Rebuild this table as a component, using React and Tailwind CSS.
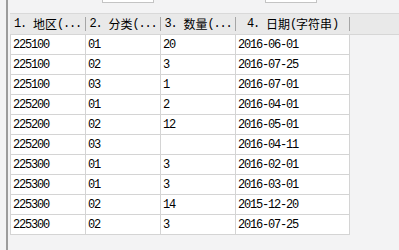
export default function App() {
  const rows = [
    ["225100", "01", "20", "2016-06-01"],
    ["225100", "02", "3", "2016-07-25"],
    ["225100", "03", "1", "2016-07-01"],
    ["225200", "01", "2", "2016-04-01"],
    ["225200", "02", "12", "2016-05-01"],
    ["225200", "03", "", "2016-04-11"],
    ["225300", "01", "3", "2016-02-01"],
    ["225300", "01", "3", "2016-03-01"],
    ["225300", "02", "14", "2015-12-20"],
    ["225300", "02", "3", "2016-07-25"],
  ];
  const mono = "font-['Liberation_Mono',monospace] text-[12px] tracking-[-1.2px]";
  const cjk = "font-['Noto_Sans_CJK_SC',sans-serif] text-[12px]";
  const widths = ["w-[76px]", "w-[75px]", "w-[75px]", "w-[114px]"];

  const Sep = () => <div className="w-[1px] h-[14px] self-center bg-[#a6a6a6] shrink-0" />;

  return (
    <div className="w-[399px] h-[250px] bg-[#f3f3f4] flex overflow-hidden text-black">
      <div className="w-[6px] shrink-0" />
      <div className="w-[2px] shrink-0 bg-[#9c9c9c]" />
      <div className="w-[2px] shrink-0" />
      <div className="flex-1 flex flex-col">
        <div className="h-[13px] flex items-start shrink-0">
          <div className="ml-[92px] w-[52px] h-[3px] bg-white border-x border-b border-[#c4c4c4]" />
          <div className="ml-[111px] w-[52px] h-[3px] bg-white border-x border-b border-[#c4c4c4]" />
        </div>
        <div className="h-[22px] flex bg-[#e9e9e9] border-t border-[#d9d9d9] border-b border-b-[#d6d6d6] shrink-0 leading-none">
          <div className={`${widths[0]} flex shrink-0`}>
            <div className="flex-1 flex items-center justify-center overflow-hidden whitespace-nowrap">
              <span className={mono}>1.</span>
              <span className={`${cjk} ml-[7px]`}>地区</span>
              <span className={mono}>(...</span>
            </div>
            <Sep />
          </div>
          <div className={`${widths[1]} flex shrink-0`}>
            <div className="flex-1 flex items-center justify-center overflow-hidden whitespace-nowrap">
              <span className={mono}>2.</span>
              <span className={`${cjk} ml-[7px]`}>分类</span>
              <span className={mono}>(...</span>
            </div>
            <Sep />
          </div>
          <div className={`${widths[2]} flex shrink-0`}>
            <div className="flex-1 flex items-center justify-center overflow-hidden whitespace-nowrap">
              <span className={mono}>3.</span>
              <span className={`${cjk} ml-[7px]`}>数量</span>
              <span className={mono}>(...</span>
            </div>
            <Sep />
          </div>
          <div className={`${widths[3]} flex shrink-0`}>
            <div className="flex-1 flex items-center justify-center overflow-hidden whitespace-nowrap">
              <span className={mono}>4.</span>
              <span className={`${cjk} ml-[7px]`}>日期</span>
              <span className={mono}>(</span>
              <span className={cjk}>字符串</span>
              <span className={mono}>)</span>
            </div>
            <Sep />
          </div>
          <div className="flex-1" />
        </div>
        <div className="w-[340px] flex flex-col bg-white border-l border-[#d4d4d4]">
          {rows.map((r, i) => (
            <div key={i} className="h-[20px] flex border-b border-[#d4d4d4]">
              {r.map((c, j) => (
                <div
                  key={j}
                  className={`${j === 0 ? "w-[75px]" : widths[j]} shrink-0 border-r border-[#d4d4d4] flex items-center pl-[2px] ${mono}`}
                >
                  {c}
                </div>
              ))}
            </div>
          ))}
        </div>
      </div>
    </div>
  );
}
